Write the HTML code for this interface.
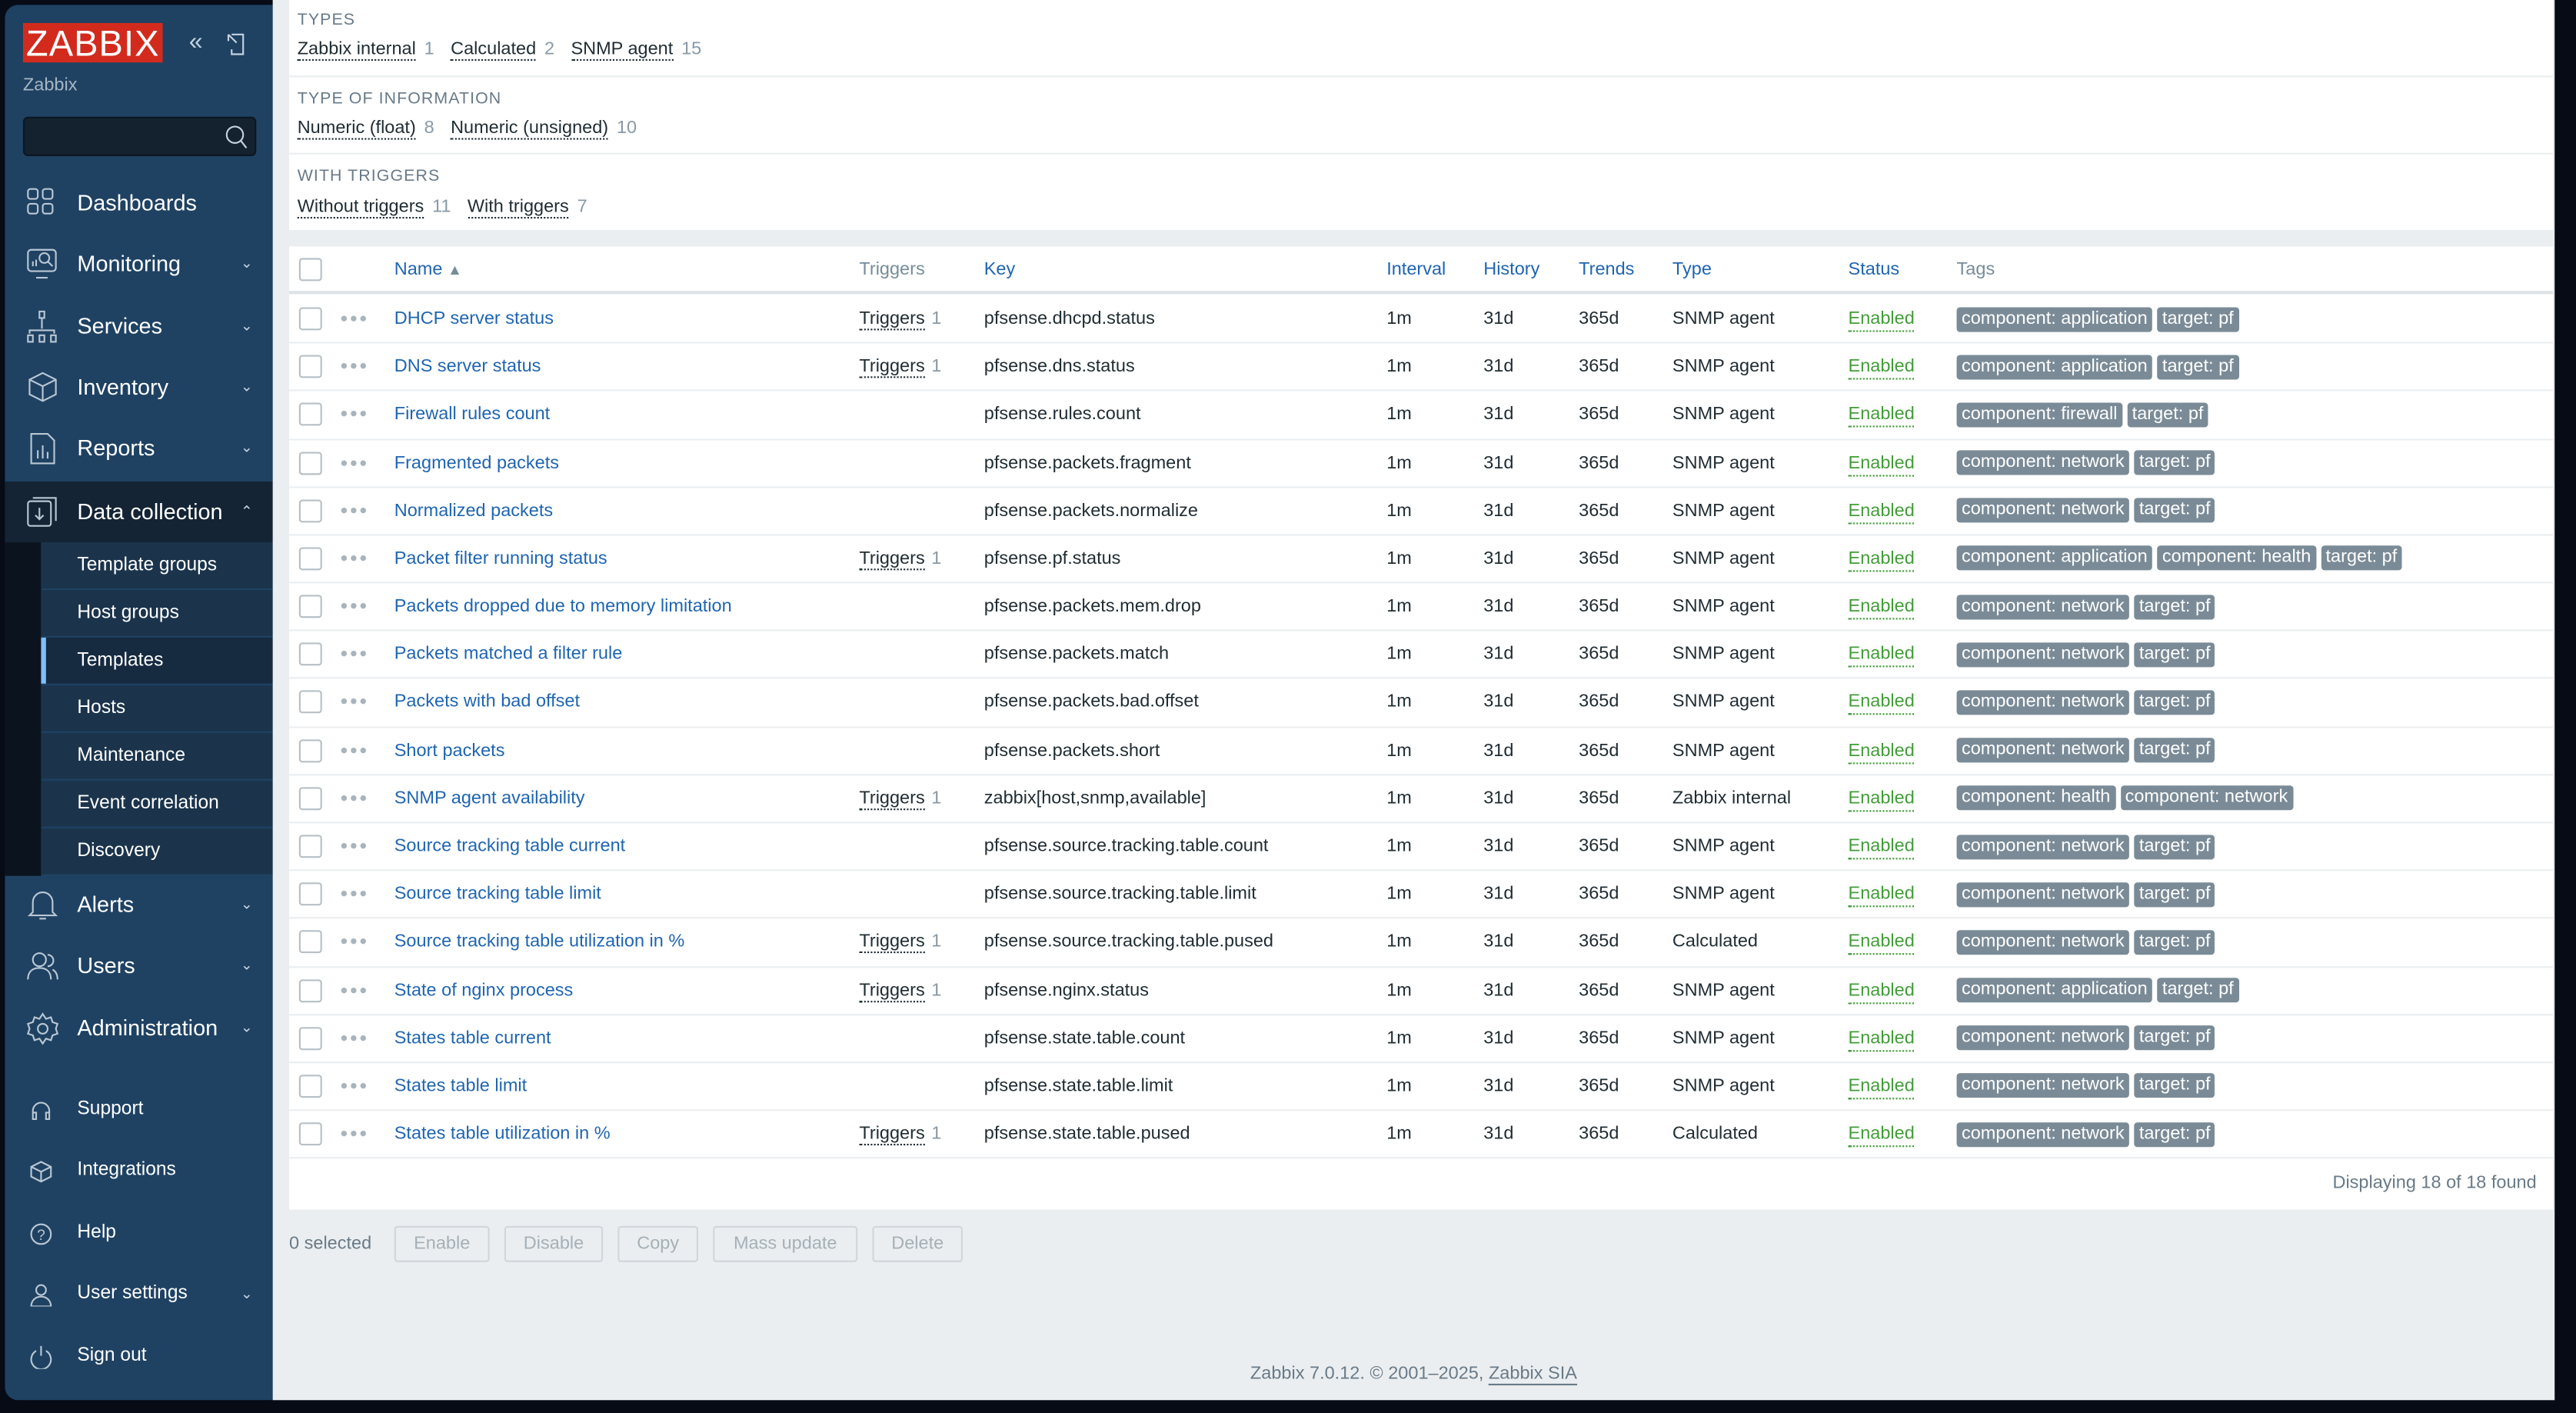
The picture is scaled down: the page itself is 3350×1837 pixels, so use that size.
<!DOCTYPE html>
<html><head><meta charset="utf-8"><style>
*{box-sizing:border-box;margin:0;padding:0}
html,body{width:3350px;height:1836px;overflow:hidden;background:#070b16}
#w{position:absolute;left:0;top:0;width:1568px;height:860px;transform:scale(2.13648);transform-origin:0 0;font-family:"Liberation Sans",Arial,sans-serif;color:#1f2c33;font-size:11px}
#sb{position:absolute;left:3px;top:3px;width:163px;height:849px;background:#1f4263;border-radius:8px 0 0 8px;overflow:hidden}
#main{position:absolute;left:166px;top:0;width:1389px;height:852px;background:#ebeef0}
.logo{position:absolute;left:11px;top:11px;width:85px;height:24px;background:#d22b1e;color:#fff;font-size:22px;line-height:25px;text-align:center;letter-spacing:.5px}
.mi{position:absolute;left:0;width:163px;height:37px;color:#fff;font-size:13.5px;line-height:37px;padding-left:44px}
.mi svg{position:absolute;left:13px;top:9px}
.mi .ch{position:absolute;right:12px;top:0;font-size:9px;color:#c5d2de}
.si{position:absolute;left:22px;width:141px;height:28px;background:#1b344c;color:#fff;font-size:11.5px;line-height:28px;padding-left:22px}
.bi{position:absolute;left:0;width:163px;height:37px;color:#fff;font-size:11.5px;line-height:37px;padding-left:44px}
.bi svg{position:absolute;left:15px;top:12px}
.fp{position:absolute;left:10px;top:0;width:1378px;height:140px;background:#fff}
.fs{position:absolute;left:5px;font-size:10px;color:#687a88;letter-spacing:.5px}
.fl{position:absolute;left:5px;font-size:11px}
.fl u{text-decoration:none;border-bottom:1px dotted #1f2c33;margin-right:2px}
.fl i{font-style:normal;color:#8899a6;margin-right:10px}
.tb{position:absolute;left:10px;top:150px;width:1378px;height:586px;background:#fff}
.r{position:absolute;left:0;width:1378px;height:29.2px;border-bottom:1px solid #ebeef0;line-height:28px;white-space:nowrap}
.r span{position:absolute;top:0}
.cb{position:absolute;left:6px;top:7px;width:14px;height:14px;border:1px solid #b7c0c6;border-radius:2px;background:#fff}
.dots{left:31px;color:#a8b4bd;font-size:8px;letter-spacing:1px}
.nm{left:64px;color:#1f65b0}
.hd{color:#1f65b0}
.tr{left:347px}
.tr u{text-decoration:none;border-bottom:1px dotted #1f2c33}
.tr i{font-style:normal;color:#8899a6;margin-left:4px}
.en{color:#429d38;border-bottom:1px dotted #429d38;line-height:13px;top:8px!important}
.tag{display:inline-block;background:#7a8b97;color:#fff;border-radius:2px;padding:0 3px;line-height:14px;height:15px;margin-right:3px;font-size:11px;vertical-align:middle}
.btn{position:absolute;top:746px;height:22px;border:1px solid #d0d6da;background:#ebeef0;color:#a5b0b8;font-size:11px;line-height:20px;text-align:center;border-radius:2px}
</style></head><body><div id="w">
<div id="sb">
 <div class="logo">ZABBIX</div>
 <div style="position:absolute;left:112px;top:15px;color:#c5d2de;font-size:15px;line-height:16px">«</div>
 <svg style="position:absolute;left:135px;top:17px" width="12" height="14" viewBox="0 0 12 14"><path d="M3 1H10V13H3V10M1 1L6 6M1 1V5" fill="none" stroke="#c5d2de" stroke-width="1"/></svg>
 <div style="position:absolute;left:11px;top:43px;color:#a7b6c4;font-size:11px">Zabbix</div>
 <div style="position:absolute;left:11px;top:68px;width:142px;height:24px;background:#14222f;border:1px solid #0c1620;border-radius:3px"><svg style="position:absolute;right:4px;top:4px" width="14" height="15"><circle cx="6" cy="6" r="5" fill="none" stroke="#c5d2de"/><path d="M9.5 9.5L13 14" stroke="#c5d2de"/></svg></div>
 <div class="mi" style="top:102px"><svg width="18" height="18"><g fill="none" stroke="#b9c7d3"><rect x="1" y="1" width="6" height="6" rx="1.5"/><rect x="10" y="1" width="6" height="6" rx="1.5"/><rect x="1" y="10" width="6" height="6" rx="1.5"/><rect x="10" y="10" width="6" height="6" rx="1.5"/></g></svg>Dashboards</div>
 <div class="mi" style="top:139px"><svg width="20" height="20"><g fill="none" stroke="#b9c7d3"><rect x="1" y="1" width="17" height="13" rx="2"/><circle cx="11" cy="6" r="3"/><path d="M13 8l3 3M4 11V8M6 11V7M6 18h7"/></g></svg>Monitoring<span class="ch">⌄</span></div>
 <div class="mi" style="top:177px"><svg width="20" height="20"><g fill="none" stroke="#b9c7d3"><rect x="8" y="0.5" width="3" height="4"/><path d="M9.5 5v6M2 14v-2h15v2"/><rect x="1" y="15" width="3" height="4"/><rect x="8" y="15" width="3" height="4"/><rect x="15" y="15" width="3" height="4"/></g></svg>Services<span class="ch">⌄</span></div>
 <div class="mi" style="top:214px"><svg width="20" height="20"><g fill="none" stroke="#b9c7d3"><path d="M10 1L18 5V14L10 18L2 14V5ZM2 5L10 9L18 5M10 9V18"/></g></svg>Inventory<span class="ch">⌄</span></div>
 <div class="mi" style="top:251px"><svg width="20" height="20"><g fill="none" stroke="#b9c7d3"><path d="M3 1H13L17 5V19H3Z"/><path d="M7 16V11M10 16V8M13 16V12"/></g></svg>Reports<span class="ch">⌄</span></div>
 <div class="mi" style="top:290px;background:#142434"><svg width="20" height="20"><g fill="none" stroke="#b9c7d3"><rect x="1" y="3" width="14" height="15" rx="1.5"/><path d="M4 1H18V15M8 7V14M5.5 11.5L8 14L10.5 11.5"/></g></svg>Data collection<span class="ch">⌃</span></div>
 <div style="position:absolute;left:0;top:327px;width:22px;height:203px;background:#0b141e"></div>
 <div class="si" style="top:327px">Template groups</div>
 <div class="si" style="top:356px">Host groups</div>
 <div class="si" style="top:385px;background:#162a40;border-left:3px solid #7cc0ff;padding-left:19px">Templates</div>
 <div class="si" style="top:414px">Hosts</div>
 <div class="si" style="top:443px">Maintenance</div>
 <div class="si" style="top:472px">Event correlation</div>
 <div class="si" style="top:501px">Discovery</div>
 <div class="mi" style="top:529px"><svg width="20" height="20"><g fill="none" stroke="#b9c7d3"><path d="M4 14V8a6 6 0 0 1 12 0v6l2 2H2ZM8 18h4"/></g></svg>Alerts<span class="ch">⌄</span></div>
 <div class="mi" style="top:566px"><svg width="20" height="20"><g fill="none" stroke="#b9c7d3"><circle cx="8" cy="6" r="4"/><path d="M1 18c0-5 3-7 7-7s7 2 7 7M13 3a3.5 3.5 0 0 1 0 7M16 12c2 1 3 3 3 6"/></g></svg>Users<span class="ch">⌄</span></div>
 <div class="mi" style="top:604px"><svg width="20" height="20"><g fill="none" stroke="#b9c7d3"><circle cx="10" cy="10" r="3"/><path d="M10 1l2 3 3-1 1 3 3 1-1 3 1 3-3 1-1 3-3-1-2 3-2-3-3 1-1-3-3-1 1-3-1-3 3-1 1-3 3 1z"/></g></svg>Administration<span class="ch">⌄</span></div>
 <div class="bi" style="top:654px"><svg width="14" height="14"><path d="M2 9V7a5 5 0 0 1 10 0v2M2 8h2v4H2zM10 8h2v4h-2z" fill="none" stroke="#b9c7d3"/></svg>Support</div>
 <div class="bi" style="top:691px"><svg width="14" height="14"><path d="M7 1l6 3v6l-6 3-6-3V4zM1 4l6 3 6-3M7 7v6" fill="none" stroke="#b9c7d3"/></svg>Integrations</div>
 <div class="bi" style="top:729px"><svg width="14" height="14"><circle cx="7" cy="7" r="6" fill="none" stroke="#b9c7d3"/><text x="4.5" y="10.5" font-size="9" fill="#b9c7d3" font-family="Liberation Sans">?</text></svg>Help</div>
 <div class="bi" style="top:766px"><svg width="14" height="14"><circle cx="7" cy="4" r="3" fill="none" stroke="#b9c7d3"/><path d="M1 14c0-4 3-6 6-6s6 2 6 6z" fill="none" stroke="#b9c7d3"/></svg>User settings<span style="position:absolute;right:12px;font-size:9px;color:#c5d2de">⌄</span></div>
 <div class="bi" style="top:804px"><svg width="14" height="14"><path d="M4 3a6 6 0 1 0 6 0M7 0v6" fill="none" stroke="#b9c7d3"/></svg>Sign out</div>
</div>
<div id="main">
 <div class="fp">
  <div class="fs" style="top:7px">TYPES</div>
  <div class="fl" style="top:24px"><u>Zabbix internal</u> <i>1</i><u>Calculated</u> <i>2</i><u>SNMP agent</u> <i>15</i></div>
  <div style="position:absolute;left:0;top:46px;width:1378px;height:1px;background:#ebeef0"></div>
  <div class="fs" style="top:55px">TYPE OF INFORMATION</div>
  <div class="fl" style="top:72px"><u>Numeric (float)</u> <i>8</i><u>Numeric (unsigned)</u> <i>10</i></div>
  <div style="position:absolute;left:0;top:93px;width:1378px;height:1px;background:#ebeef0"></div>
  <div class="fs" style="top:102px">WITH TRIGGERS</div>
  <div class="fl" style="top:120px"><u>Without triggers</u> <i>11</i><u>With triggers</u> <i>7</i></div>
 </div>
 <div class="tb">
  <div class="r" style="top:0;height:29px;border-bottom:2px solid #dfe4e7"><div class="cb"></div>
   <span class="hd" style="left:64px">Name <span style="position:static;color:#768d99;font-size:9px">▲</span></span>
   <span style="left:347px;color:#768d99">Triggers</span><span class="hd" style="left:423px">Key</span><span class="hd" style="left:668px">Interval</span><span class="hd" style="left:727px">History</span><span class="hd" style="left:785px">Trends</span><span class="hd" style="left:842px">Type</span><span class="hd" style="left:949px">Status</span><span style="left:1015px;color:#768d99">Tags</span></div>
 </div>
 <div id="rows"></div>
 <div style="position:absolute;right:11px;top:714px;color:#687a88">Displaying 18 of 18 found</div>
 <div style="position:absolute;left:10px;top:751px;color:#687a88">0 selected</div>
 <div class="btn" style="left:74px;width:58px">Enable</div>
 <div class="btn" style="left:141px;width:60px">Disable</div>
 <div class="btn" style="left:210px;width:49px">Copy</div>
 <div class="btn" style="left:268px;width:88px">Mass update</div>
 <div class="btn" style="left:365px;width:55px">Delete</div>
 <div style="position:absolute;left:0;width:1389px;top:830px;text-align:center;color:#687a88">Zabbix 7.0.12. © 2001–2025, <span style="border-bottom:1px solid #687a88">Zabbix SIA</span></div>
</div>
<script>
var d=[["DHCP server status",1,"pfsense.dhcpd.status","SNMP agent",["component: application","target: pf"]],
["DNS server status",1,"pfsense.dns.status","SNMP agent",["component: application","target: pf"]],
["Firewall rules count",0,"pfsense.rules.count","SNMP agent",["component: firewall","target: pf"]],
["Fragmented packets",0,"pfsense.packets.fragment","SNMP agent",["component: network","target: pf"]],
["Normalized packets",0,"pfsense.packets.normalize","SNMP agent",["component: network","target: pf"]],
["Packet filter running status",1,"pfsense.pf.status","SNMP agent",["component: application","component: health","target: pf"]],
["Packets dropped due to memory limitation",0,"pfsense.packets.mem.drop","SNMP agent",["component: network","target: pf"]],
["Packets matched a filter rule",0,"pfsense.packets.match","SNMP agent",["component: network","target: pf"]],
["Packets with bad offset",0,"pfsense.packets.bad.offset","SNMP agent",["component: network","target: pf"]],
["Short packets",0,"pfsense.packets.short","SNMP agent",["component: network","target: pf"]],
["SNMP agent availability",1,"zabbix[host,snmp,available]","Zabbix internal",["component: health","component: network"]],
["Source tracking table current",0,"pfsense.source.tracking.table.count","SNMP agent",["component: network","target: pf"]],
["Source tracking table limit",0,"pfsense.source.tracking.table.limit","SNMP agent",["component: network","target: pf"]],
["Source tracking table utilization in %",1,"pfsense.source.tracking.table.pused","Calculated",["component: network","target: pf"]],
["State of nginx process",1,"pfsense.nginx.status","SNMP agent",["component: application","target: pf"]],
["States table current",0,"pfsense.state.table.count","SNMP agent",["component: network","target: pf"]],
["States table limit",0,"pfsense.state.table.limit","SNMP agent",["component: network","target: pf"]],
["States table utilization in %",1,"pfsense.state.table.pused","Calculated",["component: network","target: pf"]]];
var h="";d.forEach(function(r,i){var t=180+i*29.18;
h+='<div class="r" style="left:10px;top:'+t+'px"><div class="cb"></div><span class="dots">●●●</span><span class="nm">'+r[0]+'</span>'+(r[1]?'<span class="tr"><u>Triggers</u><i>1</i></span>':'')+'<span style="left:423px">'+r[2]+'</span><span style="left:668px">1m</span><span style="left:727px">31d</span><span style="left:785px">365d</span><span style="left:842px">'+r[3]+'</span><span class="en" style="left:949px">Enabled</span><span style="left:1015px">'+r[4].map(function(x){return '<span class="tag" style="position:static">'+x+'</span>'}).join('')+'</span></div>';});
document.getElementById('rows').innerHTML=h;
</script>
</div></body></html>
